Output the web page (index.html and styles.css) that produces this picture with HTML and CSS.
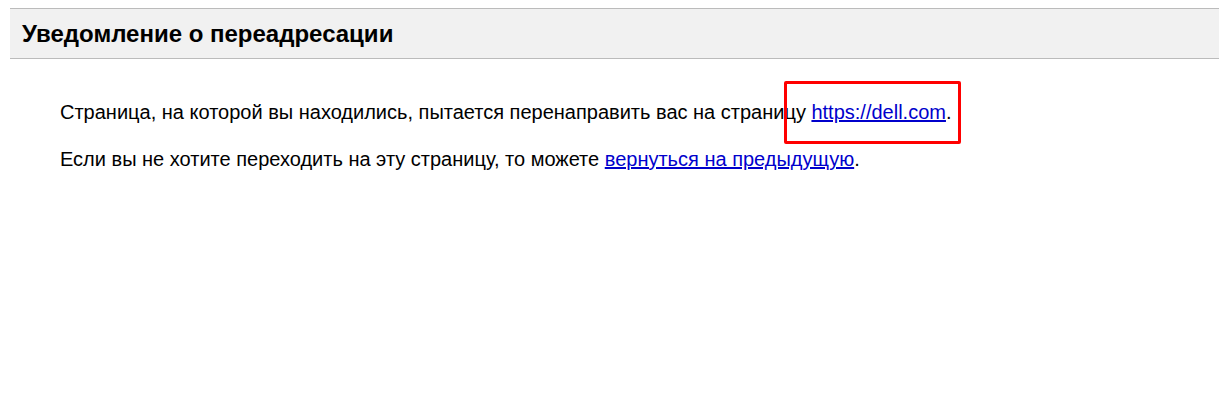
FILE: index.html
```html
<!DOCTYPE html>
<html lang="ru">
<head>
  <meta charset="UTF-8" />
  <title>Уведомление о переадресации</title>
  <link rel="stylesheet" href="styles.css">
</head>
<body>
  <div class="header">
    <h1>Уведомление о переадресации</h1>
  </div>
  <div class="content">
    <p>Страница, на которой вы находились, пытается перенаправить вас на страницу <span class="mark"><a href="#">https://dell.com</a></span>.</p>
    <p>Если вы не хотите переходить на эту страницу, то можете <a href="#">вернуться на предыдущую</a>.</p>
  </div>
</body>
</html>
```

FILE: styles.css
```css
body {
  margin: 8px 0 0 10px;
  font-family: "Liberation Sans", Arial, sans-serif;
  color: #000;
  background: #fff;
}
.header {
  background: #f1f1f1;
  border-top: 1px solid #bbb;
  border-bottom: 1px solid #bbb;
  height: 49px;
  display: flex;
  align-items: center;
  padding-left: 12px;
}
h1 {
  margin: 0;
  font-size: 24px;
  font-weight: 700;
}
.content {
  padding: 40px 50px;
}
p {
  margin: 0 0 20px;
  font-size: 20px;
  line-height: 27px;
}
a {
  color: #0000cc;
}
.mark {
  position: relative;
}
.mark::after {
  content: "";
  position: absolute;
  left: -27px;
  top: -20px;
  width: 171px;
  height: 57px;
  border: 3px solid #f00;
  border-radius: 2px;
}
```
